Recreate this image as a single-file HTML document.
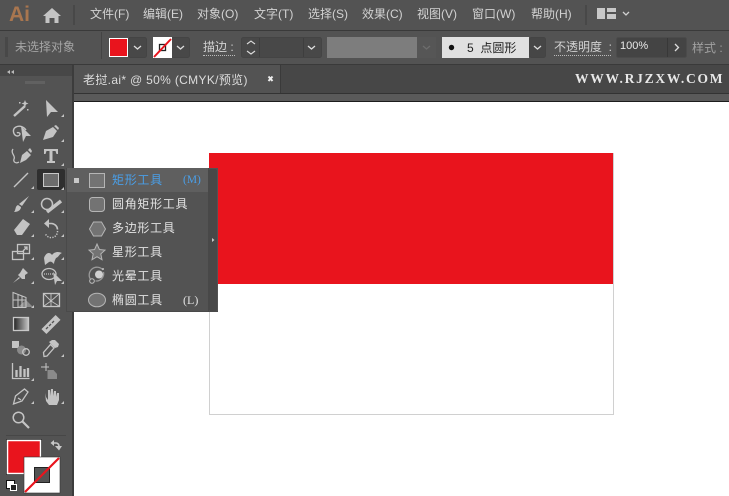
<!DOCTYPE html>
<html><head><meta charset="utf-8">
<style>
html,body{margin:0;padding:0;background:#fff}
#r{position:relative;width:729px;height:496px;overflow:hidden;background:#fff;font-family:"Liberation Sans","Noto Sans CJK SC",sans-serif;font-size:12px;color:#d2d2d2}
#r div{position:absolute}
.t{white-space:nowrap;line-height:16px}
svg{position:absolute;left:0;top:0}
</style></head><body><div id="r">
<div style="left:0;top:0;width:729px;height:30px;background:#535353"></div>
<div style="left:0;top:30px;width:729px;height:1px;background:#3a3a3a"></div>
<div style="left:0;top:31px;width:729px;height:33px;background:#535353"></div>
<div style="left:0;top:64px;width:729px;height:1px;background:#3a3a3a"></div>
<div style="left:0;top:65px;width:729px;height:29px;background:#474747"></div>
<div style="left:0;top:65px;width:72px;height:431px;background:#535353"></div>
<div style="left:0;top:65px;width:72px;height:11px;background:#474747"></div>
<div style="left:72px;top:65px;width:2px;height:431px;background:#3c3c3c"></div>
<div style="left:74px;top:65px;width:206px;height:28px;background:#535353"></div>
<div style="left:280px;top:65px;width:1px;height:28px;background:#3a3a3a"></div>
<div style="left:74px;top:93px;width:655px;height:1px;background:#333"></div>
<div style="left:74px;top:94px;width:655px;height:7px;background:#5a5a5a"></div>
<div style="left:74px;top:101px;width:655px;height:1px;background:#1c1c1c"></div>
<div style="left:74px;top:102px;width:655px;height:394px;background:#fff"></div>

<div class="t" style="left:9px;top:3px;font-size:21px;line-height:24px;font-weight:bold;color:#a9764f">Ai</div>
<div class="t" style="left:90px;top:6px">文件(F)</div>
<div class="t" style="left:143px;top:6px">编辑(E)</div>
<div class="t" style="left:197px;top:6px">对象(O)</div>
<div class="t" style="left:254px;top:6px">文字(T)</div>
<div class="t" style="left:308px;top:6px">选择(S)</div>
<div class="t" style="left:362px;top:6px">效果(C)</div>
<div class="t" style="left:417px;top:6px">视图(V)</div>
<div class="t" style="left:472px;top:6px">窗口(W)</div>
<div class="t" style="left:531px;top:6px">帮助(H)</div>

<div class="t" style="left:15px;top:39px;color:#a5a5a5">未选择对象</div>
<div class="t" style="left:203px;top:40px;width:32px;border-bottom:1px dotted #bbb;line-height:15px">描边&nbsp;:</div>
<div class="t" style="left:554px;top:40px;width:57px;border-bottom:1px dotted #bbb;line-height:15px">不透明度&nbsp;&nbsp;:</div>
<div class="t" style="left:692px;top:40px;color:#a0a0a0">样式&nbsp;:</div>
<div style="left:442px;top:37px;width:87px;height:21px;background:#e0e0e0"></div>
<div class="t" style="left:467px;top:40px;font-size:12px;color:#222">5&nbsp;&nbsp;点圆形</div>
<div class="t" style="left:83px;top:72px;color:#dcdcdc;letter-spacing:.33px">老挝.ai* @ 50% (CMYK/预览)</div>
<div class="t" style="left:575px;top:71px;font-family:'Liberation Serif',serif;font-weight:bold;font-size:13.5px;letter-spacing:1.75px;color:#e8e8e8">WWW.RJZXW.COM</div>

<div style="left:209px;top:153px;width:403px;height:261px;background:#fff;border:1px solid #d0d0d0;border-top:0"></div>
<div style="left:209px;top:153px;width:404px;height:131px;background:#e9141d"></div>

<svg width="729" height="496" viewBox="0 0 729 496">
<defs><linearGradient id="gr"><stop offset="0" stop-color="#222"/><stop offset="1" stop-color="#c4c4c4"/></linearGradient></defs>
<path d="M52 8l9 8h-2.500v7h-4v-5h-5v5h-4v-7H43z" fill="#c4c4c4"/>
<rect x="73" y="5" width="2" height="20" fill="#484848"/><rect x="585" y="5" width="2" height="20" fill="#484848"/>
<path d="M597 8h8v11h-8zM607 8h9v4h-9zM607 14h9v5h-9z" fill="#c8c8c8"/>
<path d="M623 12l3 3 3-3" fill="none" stroke="#d0d0d0" stroke-width="1.300"/>
<path d="M5 38h3M5 40h3M5 42h3M5 44h3M5 46h3M5 48h3M5 50h3M5 52h3M5 54h3M5 56h3" stroke="#3d3d3d"/>
<rect x="101" y="32" width="1" height="27" fill="#444"/>
<rect x="128.500" y="37.500" width="18" height="20" rx="2" fill="#484848" stroke="#444"/>
<rect x="109.500" y="38.500" width="18" height="18" fill="#e9141d" stroke="#fff"/>
<path d="M134 46l3.500 3 3.500-3" fill="none" stroke="#ddd" stroke-width="1.300"/>
<rect x="171.500" y="37.500" width="18" height="20" rx="2" fill="#484848" stroke="#444"/>
<rect x="153" y="37" width="19" height="21" fill="#fff"/>
<rect x="159.500" y="44.500" width="6" height="6" fill="#fff" stroke="#222" stroke-width="1.300"/>
<path d="M154 57L171 39" stroke="#e9141d" stroke-width="2"/>
<path d="M177 46l3.500 3 3.500-3" fill="none" stroke="#ddd" stroke-width="1.300"/>
<rect x="241.500" y="37.500" width="80" height="20" rx="2" fill="#484848" stroke="#444"/>
<path d="M259.500 38v19M303.500 38v19" stroke="#3e3e3e"/>
<path d="M247 44l4-3 4 3M247 51l4 3 4-3" fill="none" stroke="#ddd" stroke-width="1.100"/>
<path d="M308 46l3.500 3 3.500-3" fill="none" stroke="#ddd" stroke-width="1.300"/>
<rect x="327" y="37" width="90" height="21" fill="#7d7d7d"/>
<rect x="417" y="37" width="19" height="21" fill="#565656"/>
<path d="M423 46l3.500 3 3.500-3" fill="none" stroke="#6d6d6d" stroke-width="1.300"/>
<circle cx="451.500" cy="47.500" r="2.700" fill="#111"/>
<rect x="529.500" y="37.500" width="16" height="20" rx="2" fill="#464646" stroke="#444"/>
<path d="M534 46l3.500 3 3.500-3" fill="none" stroke="#ddd" stroke-width="1.300"/>
<rect x="616.500" y="37.500" width="70" height="20" rx="2" fill="#444" stroke="#4b4b4b"/>
<path d="M667.500 38v19" stroke="#383838"/>
<path d="M675 44l3.500 3.500-3.500 3.500" fill="none" stroke="#ddd" stroke-width="1.300"/>
<path d="M26 81v3M28 81v3M30 81v3M32 81v3M34 81v3M36 81v3M38 81v3M40 81v3M42 81v3M44 81v3" stroke="#6f6f6f"/>
<path d="M10 70l-3 2 3 2zM14 70l-3 2 3 2z" fill="#bbb"/>
<path d="M268.500 76.500l4 4.500M272.500 76.500l-4 4.500" stroke="#eee" stroke-width="2"/>

<rect x="37" y="169" width="28" height="21" rx="2" fill="#2f2f2f"/>
<rect x="43.500" y="173.500" width="15" height="13" fill="#6d6d6d" stroke="#c8c8c8"/>
<g fill="#c4c4c4">
<path d="M14 116l11-10" stroke="#c4c4c4" stroke-width="2.400" fill="none"/>
<path d="M25 100l1 2.500 2.500 1-2.500 1-1 2.500-1-2.500-2.500-1 2.500-1zM19 102h1.500v1.500H19zM27 109h1.500v1.500H27z"/>
<path d="M46 100l12 12h-7l-4 5z"/>
<path d="M21 126l10 10h-5l-3 6z"/>
<path d="M43 140l3-9 7-4 4 4-4 6z"/><path d="M54 126l2-1 3 3-1 2z"/>
<path d="M20 163l2-8 5-4 4 4-5 5z"/><path d="M28 150l2-2 2 3-1 2z"/>
<path d="M44 149h14v5h-1.500l-1-3h-3v10h2.500v2h-8v-2h2.500v-10h-3l-1 3H44z"/>
<path d="M29 196l-7 10-3-2z"/><path d="M18 205l3 2c0 3-3 5-7 5 2-2 1-6 4-7z"/>
<path d="M14 230l9-11 7 5-8 11h-5z"/>
<path d="M23 268l5 5-3 2v4h-3l-4-4 2-2z"/><path d="M13 283l6-6 1 1z"/>
<path d="M53 272l9 9h-5l-2 4z"/>
<path d="M18 307l8-7 7 7z" fill="#8a8a8a"/>
<rect x="12" y="341" width="7" height="7"/><circle cx="21.500" cy="350" r="4.500" fill="#8a8a8a"/>
<path d="M52 340l3 0 4 4-1 3-3 1-6-6z"/>
<path d="M47.500 370h6l3.500 4v5h-9.500z" fill="#8a8a8a"/>
<path d="M45 393l1 8 3 4h8l2-5 0-7-2 0-1 4v-6h-2l-1 5v-7h-2l-1 7v-6h-2v10l-2-3z"/>
<g transform="rotate(-45 51 324.500)"><rect x="41" y="321" width="20" height="7"/></g>
<path d="M44 258c2-6 6-6 8-3 2-3 6-4 10-2-3 1-3 4-6 5-1 2-2 4-2 6-2-2-3-3-5-2l-4 3z"/>
<path d="M49 219l-5 4.500 5 4.500z"/>
</g>
<g fill="none" stroke="#c4c4c4" stroke-width="1.300">
<path d="M26 130c-2-3-6-5-10-3-4 2-3 8 1 9 2 0 3-1 3-2s-2-2-3-1" stroke-width="1.400"/>
<path d="M13 149c-3 4 3 7 1 10-1 3 2 5 5 3"/>
<path d="M14 187L28 173" stroke-width="1.400"/>
<circle cx="47" cy="204" r="5.500" stroke-width="1.500"/><path d="M47 212l14-11" stroke-width="3.500"/>
<path d="M48 223.500h3.500a6.300 6.300 0 0 1 6 6" stroke-width="1.600"/>
<path d="M57.500 231a6.300 6.300 0 0 1-12 3" stroke-width="1.500" stroke-dasharray="1.300 1.300"/>
<rect x="12.500" y="251.500" width="11" height="8"/><rect x="17.500" y="244.500" width="12" height="9"/><path d="M23 251l4-4M24 247h3v3"/>
<ellipse cx="49" cy="274" rx="7" ry="5.500"/><path d="M44 274h9" stroke-dasharray="1 1"/>
<path d="M13 292.500l13 5v10H13zM13 300h13M18 294v14M22 296v12" stroke-width="1"/>
<rect x="43.500" y="293.500" width="16" height="13"/><path d="M44 294l7 7 8-7M44 306l7-5 8 5M51 294v12" stroke-width=".9"/>
<rect x="13.500" y="317.500" width="15" height="13" fill="url(#gr)" stroke="#c8c8c8"/>
<circle cx="26" cy="352" r="3.300"/>
<path d="M44 356.500l-.5-4 7-8 3.500 3.500-7 8z"/>
<path d="M12.500 363v15.500h17"/><path d="M16.500 377v-7M20.500 377v-11M24.500 377v-8M28 377v-9" stroke-width="2.300"/>
<path d="M41 367h8M46 363v8" stroke-width="1"/>
<path d="M13.500 404l2-8 9-7 3.500 3-6 9zM18 398l3 2"/>
<circle cx="18.500" cy="417.500" r="5.300" stroke-width="1.500"/><path d="M22.500 421.500l6.500 6.500" stroke-width="2.200"/>
</g>
<path d="M46 329l2-2M49 326l2-2M52 323l2-2" stroke="#535353" stroke-width="1.300"/>
<path d="M64 114v3h-3zM64 139v3h-3zM64 163v3h-3zM64 187v3h-3zM64 210v3h-3zM64 234v3h-3zM64 257v3h-3zM64 281v3h-3zM64 354v3h-3zM64 401v3h-3zM34 186v3h-3zM34 210v3h-3zM34 234v3h-3zM34 257v3h-3zM34 281v3h-3zM34 305v3h-3zM34 378v3h-3zM34 401v3h-3z" fill="#c4c4c4"/>
<rect x="6" y="435" width="60" height="1" fill="#474747"/>
<rect x="6" y="439" width="36" height="36" fill="#2a2a2a"/>
<rect x="7.500" y="440.500" width="33" height="33" fill="#e9141d" stroke="#fff" stroke-width="1.500"/>
<path d="M52 443h4a3 3 0 0 1 3 3v3" fill="none" stroke="#c8c8c8" stroke-width="1.600"/>
<path d="M55 446l4 4.500 3-4.500zM54 440l-3.500 3 3.500 3z" fill="#c8c8c8"/>
<rect x="24" y="457" width="36" height="36" fill="#fff" stroke="#333" stroke-width=".6"/>
<rect x="34.500" y="467.500" width="15" height="15" fill="#535353" stroke="#222"/>
<path d="M25 492L59 458" stroke="#e9141d" stroke-width="2.200"/>
<rect x="6.500" y="480.500" width="8" height="8" fill="#fff" stroke="#111"/><rect x="10.500" y="484.500" width="6" height="6" fill="#222" stroke="#fff"/>
</svg>
<div class="t" style="left:620px;top:38px;font-size:11px;color:#e8e8e8">100%</div>

<div style="left:66px;top:168px;width:152px;height:144px;background:#535353"></div>
<div style="left:66px;top:168px;width:1px;height:144px;background:#4a4a4a"></div>
<div style="left:66px;top:311px;width:152px;height:1px;background:#4a4a4a"></div>
<div style="left:67px;top:168px;width:141px;height:24px;background:#5f5f5f"></div>
<div style="left:208px;top:168px;width:1px;height:144px;background:#484848"></div>
<div style="left:209px;top:169px;width:8px;height:142px;background:#484848;border-radius:2px"></div>
<div class="t" style="left:112px;top:172px;color:#4a9fe8;letter-spacing:.7px">矩形工具</div>
<div class="t" style="left:183px;top:172px;color:#4a9fe8;font-size:11.500px;font-family:'Liberation Serif',serif">(M)</div>
<div class="t" style="left:112px;top:196px;color:#e2e2e2;letter-spacing:.7px">圆角矩形工具</div>
<div class="t" style="left:112px;top:220px;color:#e2e2e2;letter-spacing:.7px">多边形工具</div>
<div class="t" style="left:112px;top:244px;color:#e2e2e2;letter-spacing:.7px">星形工具</div>
<div class="t" style="left:112px;top:268px;color:#e2e2e2;letter-spacing:.7px">光晕工具</div>
<div class="t" style="left:112px;top:292px;color:#e2e2e2;letter-spacing:.7px">椭圆工具</div>
<div class="t" style="left:183px;top:292px;color:#e2e2e2;font-family:'Liberation Serif',serif">(L)</div>
<svg width="729" height="496" viewBox="0 0 729 496" style="z-index:2">
<rect x="74" y="178" width="5" height="5" fill="#c8c8c8"/>
<g fill="#737373" stroke="#b5b5b5" stroke-width="1">
<rect x="89.500" y="173.500" width="15" height="14"/>
<rect x="89.500" y="197.500" width="15" height="14" rx="3"/>
<path d="M93.500 222h8l4 7-4 7h-8l-4-7z"/>
<path d="M97 244l2.400 5.500 5.600.6-4.200 3.800 1.200 5.800-5-3-5 3 1.200-5.800-4.200-3.800 5.600-.6z"/>
<ellipse cx="97" cy="300" rx="8.500" ry="6.800"/>
</g>
<circle cx="99" cy="274.500" r="4" fill="#d0d0d0"/><path d="M91 280a7.500 7.500 0 0 1 12-10M103.500 272a7.500 7.500 0 0 1-8 9" fill="none" stroke="#999" stroke-width="1.300"/><circle cx="92" cy="281" r="2.300" fill="#535353" stroke="#c0c0c0"/><circle cx="103" cy="269" r="1" fill="#c0c0c0"/>
<path d="M212 238l2.500 2-2.500 2z" fill="#c8c8c8"/>
</svg>
</div></body></html>
